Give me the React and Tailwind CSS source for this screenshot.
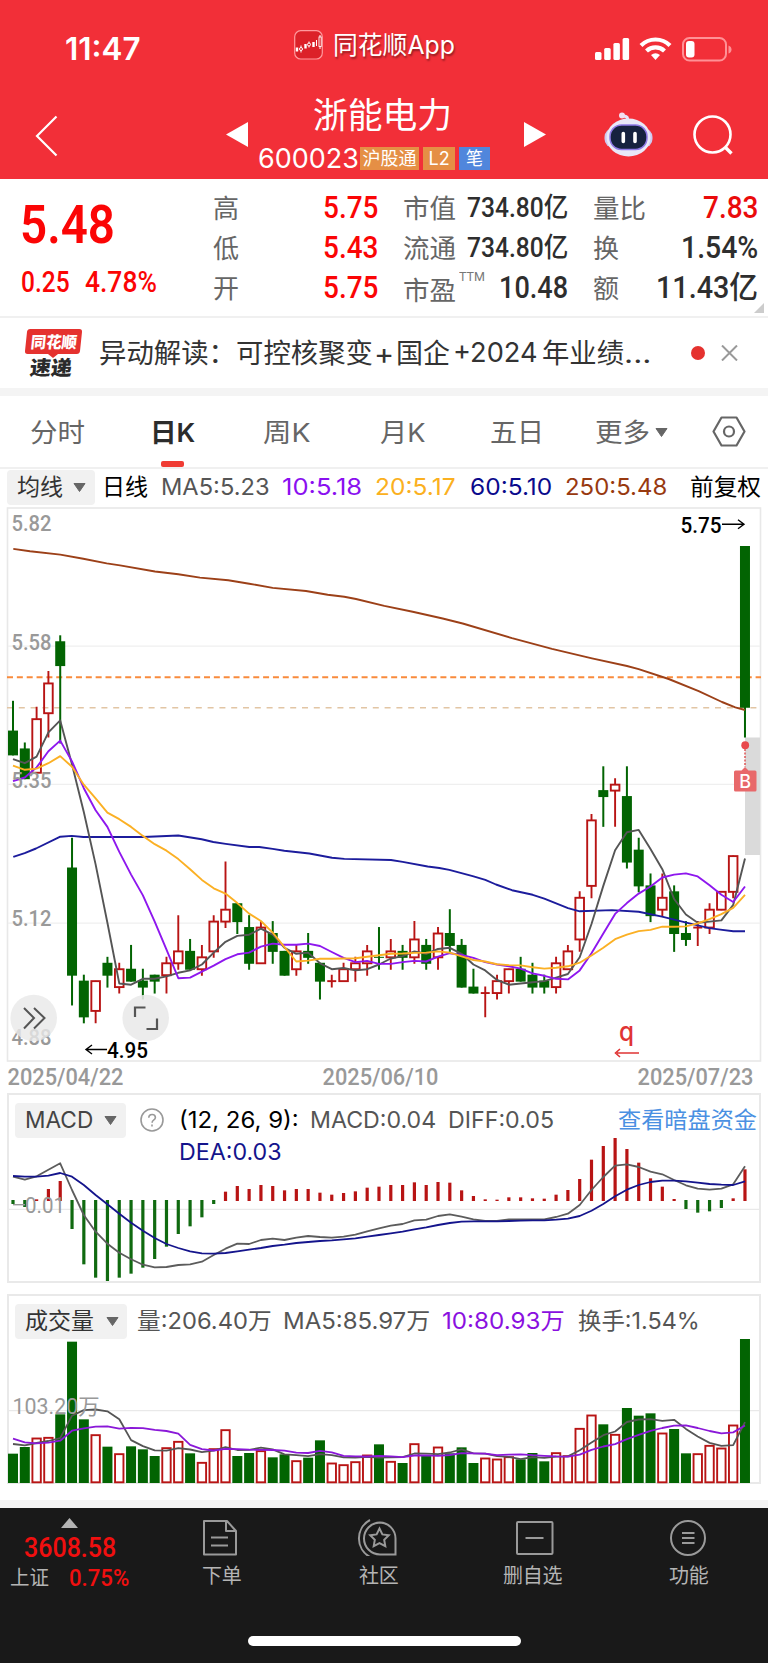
import { useLayoutEffect, useRef } from "react";

/* One line of text condensed or widened to fill the width of its box. */
function Fit({ className = "", children }) {
  const box = useRef(null);
  const line = useRef(null);
  useLayoutEffect(() => {
    line.current.style.transform = `scaleX(${box.current.clientWidth / line.current.offsetWidth})`;
  }, [children]);
  return (
    <span ref={box} className={`block shrink-0 leading-none whitespace-nowrap ${className}`}>
      <span ref={line} className="inline-block origin-left">
        {children}
      </span>
    </span>
  );
}

const DIN = "font-['Roboto','Noto_Sans_CJK_SC',sans-serif]";

/* ---------- market data ---------- */

// [open, close, high, low] in cents, plus 1 for a falling day with equal open and close
const CANDLES = [
  [544, 540, 549, 540], [541, 536, 542, 536], [537, 546, 548, 537], [547, 552, 554, 543],
  [559, 555, 560, 542], [521, 503, 526, 498], [502, 496, 503, 495], [497, 502, 502, 495],
  [505, 503, 506, 501], [501, 504, 505, 500], [504, 502, 508, 502], [502, 501, 504, 499],
  [503, 502, 503, 500], [503, 505, 506, 500], [505, 507, 513, 504], [507, 504, 509, 504],
  [504, 506, 508, 503], [507, 512, 513, 506], [512, 514, 522, 511], [515, 512, 515, 510],
  [511, 505, 513, 504], [505, 511, 512, 505], [510, 507, 512, 505], [507, 503, 507, 503],
  [504, 507, 508, 503], [507, 506, 510, 505], [505, 502, 505, 499], [502, 502, 503, 501],
  [502, 504, 505, 502], [504, 505, 506, 502], [505, 507, 508, 503], [506, 506, 511, 504, 1],
  [506, 507, 509, 504], [507, 506, 508, 504], [506, 509, 512, 505], [508, 505, 509, 504],
  [506, 510, 511, 504], [510, 508, 514, 507], [508, 501, 509, 501], [501, 500, 504, 500],
  [500, 500, 501, 496], [500, 502, 503, 499], [502, 504, 504, 500], [504, 502, 506, 502],
  [503, 501, 505, 500], [502, 501, 503, 500], [501, 505, 506, 500], [504, 507, 508, 504],
  [509, 516, 517, 507], [518, 529, 530, 516], [534, 533, 538, 528], [534, 535, 536, 528],
  [533, 522, 538, 521], [524, 518, 526, 517], [518, 513, 520, 512], [514, 516, 520, 513],
  [517, 510, 518, 507], [510, 509, 512, 508], [511, 511, 512, 508], [511, 514, 515, 510],
  [514, 517, 517, 514], [517, 523, 523, 516], [575, 548, 575, 543],
];
const isDown = ([o, c, , , flat]) => c < o || flat === 1;
const cx = (i) => 13 + i * 11.806;
const py = (c) => 546.5 + (575 - c) * 5.954;
const line = (ys) => ys.map((y, i) => `${cx(i).toFixed(1)},${y.toFixed(1)}`).join(" ");
const average = (values, n, head) =>
  values.map((v, i) =>
    i < n - 1 ? head[i] : values.slice(i - n + 1, i + 1).reduce((a, b) => a + b, 0) / n
  );

const CLOSES = CANDLES.map((c) => c[1]);
const MA5 = average(CLOSES, 5, [539.3, 538.6, 539.7, 543.8]);
const MA10 = average(CLOSES, 10, [535.6, 536.2, 537.9, 540.6, 542.4, 538.9, 534.4, 530.7, 527.9]);
const MA20 = average(CLOSES, 20, [
  538.2, 537.5, 537.7, 538.6, 539.8, 538, 535, 532.7, 530.3, 529.2, 527.9, 526.4, 525, 523.9,
  522.5, 520.8, 519, 517.6, 516.7,
]);

// long averages, sampled on a 3 x 2.6133 grid
const grid = (pts) => pts.map(([x, y]) => `${(x / 3).toFixed(1)},${(500.3 + y / 2.6133).toFixed(1)}`).join(" ");
const MA60 = grid([
  [40, 932], [74, 922], [108, 910], [181, 879], [215, 877], [250, 880], [430, 880], [535, 876],
  [605, 886], [640, 893], [677, 898], [748, 906], [778, 906], [818, 911], [853, 916], [928, 923],
  [996, 934], [1033, 937], [1173, 940], [1208, 945], [1283, 957], [1318, 961], [1348, 966],
  [1418, 982], [1456, 992], [1488, 1004], [1536, 1019], [1598, 1031], [1633, 1041], [1704, 1066],
  [1739, 1074], [1836, 1071], [1916, 1075], [1986, 1088], [2056, 1103], [2128, 1118], [2161, 1122],
  [2200, 1126], [2235, 1126],
]);
const MA250 = grid([
  [40, 127], [90, 133], [181, 142], [250, 153], [320, 165], [360, 170], [465, 186], [535, 193],
  [600, 202], [685, 209], [748, 218], [818, 229], [918, 237], [983, 247], [1033, 252], [1068, 258],
  [1153, 276], [1238, 291], [1328, 309], [1388, 322], [1536, 360], [1656, 388], [1776, 413],
  [1881, 433], [1916, 441], [2006, 467], [2096, 499], [2166, 527], [2206, 541], [2235, 548],
]);

const third = (base) => (y) => base + y / 3;
const my = third(1090);
const MACD_BARS = [
  342, 351, 328, 297, 273, 417, 523, 563, 573, 563, 551, 533, 507, 470, 432, 409, 382, 342, 305,
  288, 297, 285, 288, 301, 297, 297, 308, 314, 309, 304, 293, 290, 285, 285, 277, 285, 276, 278,
  301, 318, 328, 329, 322, 322, 325, 326, 314, 300, 267, 209, 168, 144, 177, 218, 265, 290, 327,
  357, 368, 364, 354, 325, 238,
];
const DIFF = [
  260, 269, 259, 239, 220, 300, 375, 425, 461, 488, 508, 524, 532, 531, 525, 523, 515, 495, 476,
  461, 462, 450, 446, 450, 443, 438, 441, 443, 440, 434, 424, 415, 407, 402, 391, 389, 378, 373,
  380, 388, 393, 393, 388, 388, 388, 388, 381, 371, 345, 300, 261, 227, 223, 231, 245, 253, 270,
  286, 296, 299, 296, 283, 229,
];
const DEA = [
  258, 260, 260, 257, 249, 260, 285, 315, 343, 371, 398, 422, 444, 462, 474, 484, 490, 491, 489,
  484, 479, 474, 468, 464, 459, 456, 453, 451, 448, 445, 440, 435, 430, 425, 418, 412, 405, 399,
  395, 394, 394, 394, 393, 392, 391, 391, 389, 386, 378, 362, 342, 319, 299, 285, 276, 272, 272,
  274, 278, 282, 284, 285, 274,
];

const vy = third(1290);
const VOLUMES = [
  491, 471, 444, 442, 373, 155, 388, 434, 470, 491, 469, 478, 498, 473, 454, 490, 517, 476, 419,
  498, 489, 482, 502, 493, 512, 503, 451, 519, 524, 515, 495, 463, 514, 519, 461, 497, 471, 490,
  472, 519, 504, 507, 500, 508, 489, 514, 488, 497, 415, 375, 403, 433, 354, 377, 370, 429, 417,
  490, 491, 466, 474, 405, 147,
];
const VMA5 = average(VOLUMES, 5, [462, 466, 459, 453]);
const VMA10 = average(VOLUMES, 10, [446, 457, 460, 458, 452, 422, 415, 410, 409]);

const GREEN = "#026402";
const RED = "#b81414";

/* ---------- charts ---------- */

function Label({ x, y, w, size = 22, fill = "#999", weight = 500, children }) {
  return (
    <text
      x={x} y={y} textLength={w} lengthAdjust="spacingAndGlyphs" fontSize={size} fill={fill}
      fontWeight={weight} fontFamily="Roboto, 'Noto Sans CJK SC', sans-serif"
    >
      {children}
    </text>
  );
}

function PriceChart() {
  return (
    <svg className="block h-[585px] w-[768px]" viewBox="0 506 768 585" fill="none">
      <rect x="7.5" y="508" width="753" height="553" stroke="#e8e8e8" strokeWidth="1.6" />
      {[646.2, 784.3, 923.2].map((y) => (
        <path key={y} d={`M8 ${y}H760`} stroke="#efefef" strokeWidth="1.3" />
      ))}
      <rect x="745" y="737.5" width="15" height="117.5" fill="#dadada" />
      <path d="M7 677.2H761" stroke="#f98b3c" strokeWidth="2" strokeDasharray="6 3.85" />
      <path d="M7 707.8H761" stroke="#e2c5a4" strokeWidth="1.5" strokeDasharray="6 5.8" />
      {CANDLES.map((c, i) => {
        const x = cx(i);
        const top = py(Math.max(c[0], c[1]));
        const bottom = py(Math.min(c[0], c[1]));
        return isDown(c) ? (
          <g key={i} fill={GREEN}>
            <rect x={x - 1} y={py(c[2]) - 0.5} width="2" height={py(c[3]) - py(c[2]) + 1} />
            <rect x={x - 5} y={top - 0.5} width="10" height={bottom - top + 1} />
          </g>
        ) : (
          <g key={i} stroke={RED} strokeWidth="1.9">
            <path d={`M${x} ${py(c[2]) - 0.5}V${top}M${x} ${bottom}V${py(c[3]) + 0.5}`} />
            {top === bottom ? (
              <path d={`M${x - 4.5} ${top}H${x + 4.5}`} />
            ) : (
              <rect x={x - 4.3} y={top} width="8.6" height={bottom - top} />
            )}
          </g>
        );
      })}
      <g strokeWidth="1.9" strokeLinejoin="round">
        <polyline points={MA250} stroke="#9c4018" />
        <polyline points={MA60} stroke="#1c1c9c" />
        <polyline points={line(MA5.map(py))} stroke="#555" />
        <polyline points={line(MA10.map(py))} stroke="#8e17ee" />
        <polyline points={line(MA20.map(py))} stroke="#fbb024" />
      </g>
      <Label x="11.5" y="530.5" w="40">5.82</Label>
      <Label x="11.5" y="649.5" w="40">5.58</Label>
      <Label x="11.5" y="788" w="40">5.35</Label>
      <Label x="11.5" y="926" w="40">5.12</Label>

      <Label x="107" y="1057.5" w="41" fill="#000">4.95</Label>
      <path d="M107 1049.5H86M92 1045l-6 4.5 6 4.5" stroke="#000" strokeWidth="1.4" />
      <Label x="680.5" y="532.5" w="41" fill="#000">5.75</Label>
      <path d="M722 524.3H743.5M738 519.8l6 4.5-6 4.5" stroke="#000" strokeWidth="1.4" />

      <Label x="11.5" y="1045" w="40">4.88</Label>
      <circle cx="33.7" cy="1018" r="23.3" fill="#e9e9e9" fillOpacity="0.8" />
      <path d="M24 1008l10 10-10 10.5M34 1008l10.5 10-10.5 10.5" stroke="#555" strokeWidth="2" />
      <circle cx="145.7" cy="1018" r="23.3" fill="#e9e9e9" fillOpacity="0.88" />
      <path d="M135 1017v-9.5h10.5M157 1018.5v10.5h-10.5" stroke="#555" strokeWidth="2.2" />

      <path d="M745 749V767" stroke="#e05555" strokeWidth="1.5" strokeDasharray="2 1.5" />
      <circle cx="745.2" cy="745.2" r="3.9" fill="#e8484c" />
      <path d="M741.5 770.5l3.5-3.500 3.500 3.500h6.500q1.500 0 1.500 1.500v18q0 1.500-1.500 1.500h-19.500q-1.500 0-1.500-1.500v-18q0-1.500 1.500-1.500z" fill="#e8686a" />
      <text x="745.2" y="788" textAnchor="middle" fontSize="18" fontWeight="500" fill="#fff" fontFamily="Inter, sans-serif">B</text>

      <text x="619" y="1041" fontSize="26" fontWeight="500" fill="#e03434" fontFamily="Inter, sans-serif" textLength="15" lengthAdjust="spacingAndGlyphs">q</text>
      <path d="M639 1053H617M620 1049l-4.500 4 4.500 4" stroke="#e03434" strokeWidth="1.600" />

      <Label x="7.5" y="1084.5" w="116" size="23">2025/04/22</Label>
      <Label x="322.5" y="1084.5" w="116" size="23">2025/06/10</Label>
      <Label x="637.5" y="1084.5" w="116" size="23">2025/07/23</Label>
    </svg>
  );
}

function MacdChart() {
  return (
    <svg className="block h-[116px] w-[768px]" viewBox="0 1168 768 116" fill="none" overflow="visible">
      <path d="M8 1209.3H760" stroke="#e9e9e9" strokeWidth="1.3" />
      {MACD_BARS.map((v, i) => (
        <path
          key={i} strokeWidth="3.2"
          d={v > 331 ? `M${cx(i)} 1200V${my(v)}` : `M${cx(i)} 1201V${my(v)}`}
          stroke={v > 331 ? "#106a10" : RED}
        />
      ))}
      <g strokeWidth="1.8" strokeLinejoin="round">
        <polyline points={line(DIFF.map(my))} stroke="#5c5c5c" />
        <polyline points={line(DEA.map(my))} stroke="#14148c" />
      </g>
      <path d="M13 1204.7H25" stroke="#999" strokeWidth="1.4" />
      <Label x="25" y="1212.5" w="40" weight="400">0.01</Label>
    </svg>
  );
}

function VolumeChart() {
  return (
    <svg className="block h-[144px] w-[768px]" viewBox="0 1340 768 144" fill="none" overflow="visible">
      <path d="M8 1410.7H760" stroke="#e9e9e9" strokeWidth="1.3" />
      {VOLUMES.map((v, i) =>
        isDown(CANDLES[i]) ? (
          <rect key={i} x={cx(i) - 5} y={vy(v)} width="10" height={1483 - vy(v)} fill={GREEN} />
        ) : (
          <rect
            key={i} x={cx(i) - 4.2} y={vy(v) + 0.5} width="8.4" height={1481.8 - vy(v)}
            fill="#fff" stroke={RED} strokeWidth="1.9"
          />
        )
      )}
      <g strokeWidth="1.8" strokeLinejoin="round">
        <polyline points={line(VMA5.map(vy))} stroke="#555" />
        <polyline points={line(VMA10.map(vy))} stroke="#8a18d8" />
      </g>
      <Label x="12.5" y="1414" w="87" weight="400">103.20万</Label>
    </svg>
  );
}

/* ---------- small parts ---------- */

function Caret({ className = "" }) {
  return (
    <svg className={`h-[9px] w-[13px] shrink-0 ${className}`} viewBox="0 0 13 9">
      <path d="M1 .5h11L6.5 8.5z" fill="#666" stroke="#666" strokeLinejoin="round" />
    </svg>
  );
}

function StatusBar() {
  return (
    <div className="flex h-[92px] items-start text-white">
      <Fit className="mt-[33px] ml-[65px] w-[76px] text-[31px] font-semibold">11:47</Fit>
      <svg className="mt-[30px] ml-[153px] h-[30px] w-[29px]" viewBox="0 0 29 30" fill="none" stroke="#fff">
        <rect x="0.7" y="0.7" width="27.6" height="28.3" rx="6" stroke="#ff9a9e" strokeWidth="1.200" fill="#dc2129" />
        <path d="M3 17.500v4M11.500 14v4.500M19.500 12v5" strokeWidth="2.400" />
        <path d="M7 15.500v7M15 11.500v6M22.500 10v6" strokeWidth="1" />
        <circle cx="7" cy="19" r="1.500" strokeWidth="1" fill="#dc2129" />
        <circle cx="15" cy="14.500" r="1.500" strokeWidth="1" fill="#dc2129" />
        <path d="M26 5v14" strokeWidth="1" />
        <rect x="25" y="7" width="2.200" height="9.500" strokeWidth="0.900" fill="#dc2129" />
      </svg>
      <Fit className="mt-[33px] ml-[10px] w-[122px] text-[25px] text-shadow-[1px_2px_2px_rgba(0,0,0,0.4)]">同花顺App</Fit>
      <svg className="mt-[37px] ml-[140px] h-[24px] w-[35px]" viewBox="0 0 35 24" fill="#fff">
        <rect y="15" width="6.5" height="8" rx="1.5" />
        <rect x="9.2" y="11" width="6.5" height="12" rx="1.5" />
        <rect x="18.4" y="6" width="6.5" height="17" rx="1.5" />
        <rect x="27.6" y="1" width="6.5" height="22" rx="1.5" />
      </svg>
      <svg className="mt-[36px] ml-[9px] h-[25px] w-[33px]" viewBox="0 0 33 25" fill="none" stroke="#fff" strokeWidth="4.2">
        <path d="M2 9.5a20.5 20.5 0 0 1 29 0" />
        <path d="M7.5 15a13 13 0 0 1 18 0" />
        <path d="M12 19q4.500-3.300 9 0l-4.500 5z" fill="#fff" stroke="none" />
      </svg>
      <svg className="mt-[37px] ml-[10px] h-[25px] w-[50px]" viewBox="0 0 50 25" fill="none">
        <rect x="1" y="1" width="43" height="22.5" rx="6.5" stroke="#ff9196" strokeWidth="2" />
        <rect x="4" y="4" width="8.5" height="16.5" rx="3" fill="#fff" />
        <path d="M46.500 8.500q3 1 3 4t-3 4z" fill="#ff9196" />
      </svg>
    </div>
  );
}

function TitleBar() {
  return (
    <div className="flex h-[87px] items-start text-white">
      <svg className="mt-[23px] ml-[35px] h-[42px] w-[23px]" viewBox="0 0 23 42" fill="none" stroke="#fff" strokeWidth="2.2">
        <path d="M21.5 1.5L2 21l19.5 19.5" />
      </svg>
      <svg className="mt-[30px] ml-[168px] h-[25px] w-[22px]" viewBox="0 0 22 25" fill="#fff">
        <path d="M22 0v25L0 12.5z" />
      </svg>
      <div className="ml-[10px] flex w-[250px] flex-col">
        <Fit className="mt-[6px] ml-[55px] w-[139px] text-[35px]">浙能电力</Fit>
        <div className="mt-[12px] flex h-[27px] items-center">
          <Fit className="w-[101px] text-[27.5px]">600023</Fit>
          <span className="ml-px flex h-[23px] w-[59px] items-center justify-center bg-[#e58f45]">
            <Fit className="w-[54px] text-[18px]">沪股通</Fit>
          </span>
          <span className="ml-[4px] flex h-[23px] w-[32px] items-center justify-center bg-[#e58f45]">
            <Fit className="w-[21px] text-[18px]">L2</Fit>
          </span>
          <span className="ml-[4px] flex h-[23px] w-[31px] items-center justify-center bg-[#5086dc]">
            <Fit className="w-[17px] text-[18px]">笔</Fit>
          </span>
        </div>
      </div>
      <svg className="mt-[30px] ml-[16px] h-[25px] w-[22px]" viewBox="0 0 22 25" fill="#fff">
        <path d="M0 0v25l22-12.5z" />
      </svg>
      <svg className="mt-[20px] ml-[58px] h-[45px] w-[49px]" viewBox="0 0 49 45" fill="none">
        <rect x="0.5" y="16" width="48" height="20" rx="9" fill="#cfc9f0" />
        <ellipse cx="24.5" cy="25.5" rx="22" ry="19" fill="#e9e8f8" />
        <path d="M23 8q2-3-3-4" stroke="#e6e5f8" strokeWidth="3" />
        <circle cx="18" cy="3.5" r="3" fill="#f3dff0" />
        <rect x="6" y="13" width="37" height="24.5" rx="11.5" fill="#16223f" stroke="#8f7ae6" strokeWidth="1.5" />
        <path d="M19.300 21.500v8M31 21.500v8" stroke="#fff" strokeWidth="3.600" strokeLinecap="round" />
      </svg>
      <svg className="mt-[23px] ml-[40px] h-[40px] w-[42px]" viewBox="0 0 42 40" fill="none" stroke="#fff" strokeWidth="2.6">
        <circle cx="19.500" cy="19.500" r="18" />
        <path d="M32 32l6.500 6.500" strokeWidth="3.400" />
      </svg>
    </div>
  );
}

function Quote() {
  return (
    <section className={`flex h-[139px] items-start border-b-2 border-[#f0f0f0] ${DIN}`}>
      <div className="ml-[20px] w-[137px] text-[#fb0505]">
        <Fit className="mt-[19px] w-[95px] text-[54px] font-semibold">5.48</Fit>
        <div className="mt-[16px] ml-px flex gap-[15px]">
          <Fit className="w-[49px] text-[29px] font-medium">0.25</Fit>
          <Fit className="w-[72px] text-[29px] font-medium">4.78%</Fit>
        </div>
      </div>
      <div className="mt-[9px] ml-[56px] w-[165px]">
        {[["高", "5.75"], ["低", "5.43"], ["开", "5.75"]].map(([k, v]) => (
          <div key={k} className="flex h-[40px] items-center justify-between">
            <Fit className="mt-px w-[26px] text-[26px] text-[#666]">{k}</Fit>
            <Fit className="mb-[2px] w-[55px] text-[31px] font-medium text-[#fb0505]">{v}</Fit>
          </div>
        ))}
      </div>
      <div className="mt-[9px] ml-[25px] w-[165px] text-[#2e2e2e]">
        <div className="flex h-[40px] items-center justify-between">
          <Fit className="mt-px w-[53px] text-[26px] text-[#666]">市值</Fit>
          <Fit className="w-[101px] text-[27px] font-medium">734.80亿</Fit>
        </div>
        <div className="flex h-[40px] items-center justify-between">
          <Fit className="mt-px w-[53px] text-[26px] text-[#666]">流通</Fit>
          <Fit className="w-[101px] text-[27px] font-medium">734.80亿</Fit>
        </div>
        <div className="flex h-[40px] items-center">
          <Fit className="mt-[5px] w-[53px] text-[26px] text-[#666]">市盈</Fit>
          <Fit className="mb-[23px] ml-[3px] w-[26px] text-[13px] text-[#777]">TTM</Fit>
          <Fit className="mb-[2px] ml-auto w-[69px] text-[31px] font-medium">10.48</Fit>
        </div>
      </div>
      <div className="mt-[9px] ml-[25px] w-[165px] text-[#2e2e2e]">
        <div className="flex h-[40px] items-center justify-between">
          <Fit className="mt-px w-[53px] text-[26px] text-[#666]">量比</Fit>
          <Fit className="mb-[2px] w-[55px] text-[31px] font-medium text-[#ea0b0b]">7.83</Fit>
        </div>
        <div className="flex h-[40px] items-center justify-between">
          <Fit className="mt-px w-[26px] text-[26px] text-[#666]">换</Fit>
          <Fit className="mb-[2px] w-[77px] text-[31px] font-medium">1.54%</Fit>
        </div>
        <div className="flex h-[40px] items-center justify-between">
          <Fit className="mt-px w-[26px] text-[26px] text-[#666]">额</Fit>
          <Fit className="mb-[2px] w-[102px] text-[31px] font-medium">11.43亿</Fit>
        </div>
      </div>
      <svg className="-ml-[4px] mt-[124px] h-[10px] w-[10px]" viewBox="0 0 10 10" fill="#ccc">
        <path d="M10 0v10H0z" />
      </svg>
    </section>
  );
}

function News() {
  return (
    <section className="flex h-[78px] items-center border-b-8 border-[#f4f4f4] text-[#333]">
      <div className="ml-[24px] flex w-[58px] flex-col items-center">
        <div className="flex h-[25px] w-[55px] -skew-x-6 items-center justify-center rounded-[3px] bg-[#e5322f]">
          <Fit className="w-[46px] text-[16px] font-black text-white">同花顺</Fit>
        </div>
        <svg className="h-[4px] w-[10px]" viewBox="0 0 10 4" fill="#e5322f">
          <path d="M0 0h10L5 4z" />
        </svg>
        <Fit className="mr-[4px] w-[42px] -skew-x-6 text-[20px] font-black text-[#2a2a2a]">速递</Fit>
      </div>
      <Fit className="ml-[17px] w-[137px] text-[27px]">异动解读：</Fit>
      <Fit className="w-[137px] text-[27px]">可控核聚变</Fit>
      <Fit className="ml-px w-[20px] text-[29px]">+</Fit>
      <Fit className="ml-[2px] w-[54px] text-[27px]">国企</Fit>
      <Fit className="ml-[3px] w-[85px] text-[27.5px]">+2024</Fit>
      <Fit className="ml-[4px] w-[82px] text-[27px]">年业绩</Fit>
      <Fit className="w-[27px] text-[27px]">...</Fit>
      <span className="ml-[40px] h-[14px] w-[14px] rounded-full bg-[#e5322f]" />
      <svg className="ml-[16px] h-[16px] w-[17px]" viewBox="0 0 17 16" fill="none" stroke="#999" strokeWidth="2">
        <path d="M1 .5l15 15M16 .5l-15 15" />
      </svg>
    </section>
  );
}

function Tabs() {
  return (
    <nav className="flex h-[73px] items-start border-b-2 border-[#f0f0f0] pt-[24px] text-[26px] text-[#666]">
      <Fit className="ml-[30px] w-[55px]">分时</Fit>
      <div className="ml-[65px] flex w-[45px] flex-col items-center">
        <Fit className="w-[45px] font-semibold text-[#2c2c2c]">日K</Fit>
        <span className="mt-[15px] h-[6px] w-[23px] rounded-[2px] bg-[#f03c34]" />
      </div>
      <Fit className="ml-[68px] w-[47px]">周K</Fit>
      <Fit className="ml-[70px] w-[45px]">月K</Fit>
      <Fit className="ml-[65px] w-[54px]">五日</Fit>
      <Fit className="ml-[51px] w-[55px]">更多</Fit>
      <Caret className="mt-[8px] ml-[5px]" />
      <svg className="-mt-[4px] ml-[44px] h-[31px] w-[34px]" viewBox="0 0 34 31" fill="none" stroke="#666" strokeWidth="2.2">
        <path d="M9.5 1.5h15l8 14-8 14h-15l-8-14z" strokeLinejoin="round" />
        <circle cx="17" cy="15.5" r="5" />
      </svg>
    </nav>
  );
}

function Averages() {
  return (
    <div className="flex h-[37px] items-center text-[23px]">
      <div className="ml-[7px] flex h-[35px] w-[88px] items-center rounded-[4px] bg-[#f1f1f1] pl-[10px] text-[#333]">
        <Fit className="w-[46px]">均线</Fit>
        <Caret className="ml-[10px]" />
      </div>
      <Fit className="ml-[7px] w-[46px] text-black">日线</Fit>
      <Fit className="ml-[13px] w-[108px] text-[#555]">MA5:5.23</Fit>
      <Fit className="ml-[13px] w-[80px] text-[#8a10f0]">10:5.18</Fit>
      <Fit className="ml-[13px] w-[81px] text-[#fbb020]">20:5.17</Fit>
      <Fit className="ml-[14px] w-[82px] text-[#0a0a8c]">60:5.10</Fit>
      <Fit className="ml-[13px] w-[102px] text-[#98390f]">250:5.48</Fit>
      <Fit className="ml-[23px] w-[71px] text-black">前复权</Fit>
    </div>
  );
}

function TabItem({ icon, label, className }) {
  return (
    <div className={`flex flex-col ${className}`}>
      {icon}
      <span className="mt-[10px] text-[20px] leading-none tracking-[-0.3px] whitespace-nowrap">{label}</span>
    </div>
  );
}

function BottomBar() {
  const icon = { fill: "none", stroke: "#9a9a9a", strokeWidth: 2, viewBox: "0 0 40 37" };
  return (
    <footer className="flex h-[155px] flex-col bg-[#191919] text-[#b4b4b4]">
      <div className="flex h-[128px] items-start">
        <div className={`ml-[10px] flex w-[119px] flex-col ${DIN}`}>
          <svg className="mt-[10px] ml-[51px] h-[10px] w-[17px]" viewBox="0 0 17 10" fill="#b4b4b4">
            <path d="M0 10L8.5 0 17 10z" />
          </svg>
          <Fit className="mt-[6px] ml-[14px] w-[92px] text-[28px] font-medium text-[#f00f0f]">3608.58</Fit>
          <div className="mt-[4px] flex items-center justify-between">
            <Fit className="w-[39px] text-[20px]">上证</Fit>
            <Fit className="w-[60px] text-[24px] font-medium text-[#f00f0f]">0.75%</Fit>
          </div>
        </div>
        <TabItem
          className="mt-[11px] ml-[73px] w-[40px]"
          label="下单"
          icon={
            <svg {...icon} className="h-[37px] w-[40px]">
              <path d="M2 2h23l9 10v23.5H2zM24 2.5V12h10M9 18.5h17M9 26.5h17" strokeLinejoin="round" />
            </svg>
          }
        />
        <TabItem
          className="mt-[11px] ml-[117px] w-[40px]"
          label="社区"
          icon={
            <svg {...icon} className="-ml-[2px] h-[37px] w-[41px]">
              <path d="M22.5 3.500a16 16 0 1 0 0 32H38V19.500A16 16 0 0 0 22.500 3.500z" />
              <path d="M12.500 1a21 21 0 0 0 0 37" />
              <path d="M22 9.500l2.900 5.900 6.400.9-4.600 4.500 1.100 6.400-5.800-3-5.800 3 1.100-6.400-4.600-4.500 6.400-.9z" />
            </svg>
          }
        />
        <TabItem
          className="mt-[11px] ml-[104px] w-[60px]"
          label="删自选"
          icon={
            <svg {...icon} className="ml-[11px] h-[37px] w-[40px]">
              <rect x="3" y="3" width="35.5" height="32" rx="1" />
              <path d="M11.5 19h18" />
            </svg>
          }
        />
        <TabItem
          className="mt-[11px] ml-[106px] w-[40px]"
          label="功能"
          icon={
            <svg {...icon} className="h-[37px] w-[40px]">
              <circle cx="19" cy="19" r="17" />
              <path d="M13 14h12.5M13 19h12.5M13 24h12.5" />
            </svg>
          }
        />
      </div>
      <span className="mx-auto h-[10px] w-[273px] rounded-full bg-white" />
    </footer>
  );
}

export default function App() {
  return (
    <div className="flex h-[1663px] w-[768px] flex-col overflow-hidden bg-white font-['Inter','Noto_Sans_CJK_SC',sans-serif]">
      <header className="h-[179px] bg-[#f22f38]">
        <StatusBar />
        <TitleBar />
      </header>
      <Quote />
      <News />
      <Tabs />
      <Averages />
      <PriceChart />

      <section className="mt-[2px]">
        <div className="ml-[7px] flex h-[190px] w-[754px] flex-col border-2 border-[#e9e9e9]">
          <div className="flex h-[46px] shrink-0 items-center pt-[4px] text-[23px]">
            <div className="ml-[6px] flex h-[35px] w-[111px] items-center rounded-[4px] bg-[#f1f1f1] pl-[10px] text-[#444]">
              <Fit className="w-[68px]">MACD</Fit>
              <Caret className="ml-[11px]" />
            </div>
            <svg className="ml-[14px] h-[24px] w-[24px]" viewBox="0 0 24 24" fill="none" stroke="#999" strokeWidth="1.6">
              <circle cx="12" cy="12" r="11" />
              <path d="M8.8 9.8q0-3.3 3.3-3.3t3.3 3q0 1.5-1.800 2.700-1.500 1-1.500 2.600M12 16.500v2" />
            </svg>
            <Fit className="ml-[15px] w-[120px] text-black">(12, 26, 9):</Fit>
            <Fit className="ml-[11px] w-[126px] text-[#555]">MACD:0.04</Fit>
            <Fit className="ml-[12px] w-[106px] text-[#555]">DIFF:0.05</Fit>
            <Fit className="mr-[2px] ml-auto w-[139px] text-[#4a90e2]">查看暗盘资金</Fit>
          </div>
          <Fit className="ml-[170px] w-[103px] text-[23px] text-[#14148c]">DEA:0.03</Fit>
          <div className="-ml-[9px] mt-[4px]">
            <MacdChart />
          </div>
        </div>
        <div className="mt-[11px] ml-[7px] flex h-[190px] w-[754px] flex-col border-2 border-[#e9e9e9]">
          <div className="flex h-[44px] shrink-0 items-center pt-[7px] text-[23px] text-[#555]">
            <div className="ml-[6px] flex h-[35px] w-[112px] shrink-0 items-center rounded-[4px] bg-[#f1f1f1] pl-[10px] text-[#333]">
              <Fit className="w-[69px]">成交量</Fit>
              <Caret className="ml-[12px]" />
            </div>
            <Fit className="ml-[10px] w-[135px]">量:206.40万</Fit>
            <Fit className="ml-[11px] w-[147px]">MA5:85.97万</Fit>
            <Fit className="ml-[12px] w-[123px] text-[#8a10e0]">10:80.93万</Fit>
            <Fit className="ml-[13px] w-[122px]">换手:1.54%</Fit>
          </div>
          <div className="-ml-[9px]">
            <VolumeChart />
          </div>
        </div>
      </section>
      <div className="mt-auto h-[8px] shrink-0 bg-[#f4f4f4]" />
      <BottomBar />
    </div>
  );
}
